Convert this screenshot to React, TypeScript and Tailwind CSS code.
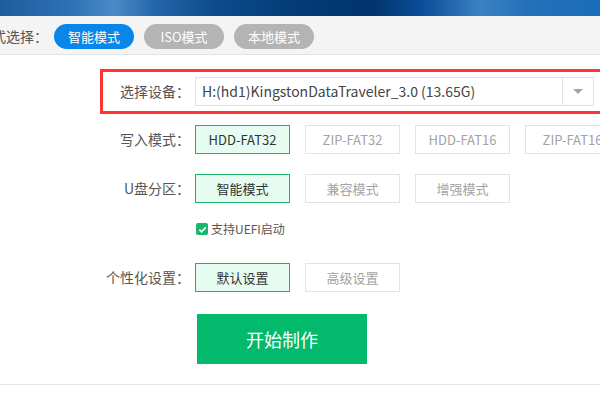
import React, { useState } from 'react';

const FONT = '"Noto Sans CJK SC", "Noto Sans", sans-serif';

const WRITE_MODES = ['HDD-FAT32', 'ZIP-FAT32', 'HDD-FAT16', 'ZIP-FAT16'];
const PARTITION_MODES = ['智能模式', '兼容模式', '增强模式'];
const CUSTOM_MODES = ['默认设置', '高级设置'];

function OptionButton({ label, active, onClick }: { label: string; active: boolean; onClick: () => void }) {
  return (
    <button
      onClick={onClick}
      className={
        active
          ? 'flex h-[29px] w-[95px] shrink-0 items-center justify-center border border-[#1cb36b] bg-[#e6fcf0] text-[13px] text-[#333]'
          : 'flex h-[29px] w-[95px] shrink-0 items-center justify-center border border-[#e3e3e3] bg-white text-[13px] text-[#a3a3a3]'
      }
    >
      {label}
    </button>
  );
}

function Row({ label, children, className = '' }: { label: string; children: React.ReactNode; className?: string }) {
  return (
    <div className={`flex items-center ${className}`}>
      <span className="w-[90px] shrink-0 text-right text-[14px] text-[#555]">{label}</span>
      <div className="ml-[5px] flex gap-[15px]">{children}</div>
    </div>
  );
}

export default function App() {
  const [mode, setMode] = useState('智能模式');
  const [writeMode, setWriteMode] = useState('HDD-FAT32');
  const [partition, setPartition] = useState('智能模式');
  const [custom, setCustom] = useState('默认设置');
  const [uefi, setUefi] = useState(true);

  return (
    <div className="relative h-[400px] w-[600px] overflow-hidden bg-white" style={{ fontFamily: FONT }}>
      <div className="h-[16px] bg-[linear-gradient(90deg,#1d5c9f_0%,#2e73b5_12%,#4a8bc8_19%,#2366a9_26%,#0d4a8c_36%,#043b77_50%,#01346c_62%,#0a4c96_70%,#3a81c3_80%,#2470b9_88%,#1b6cb8_100%)]" />

      <div className="flex h-[39px] items-start border-b border-[#e3e3e3] bg-[#f4f4f4] pt-[8px]">
        <span className="ml-[-22px] w-[70px] shrink-0 text-[14px] leading-[25px] text-[#555]">模式选择：</span>
        <div className="ml-[6px] flex gap-[10px]">
          {['智能模式', 'ISO模式', '本地模式'].map((m) => (
            <button
              key={m}
              onClick={() => setMode(m)}
              className={
                m === mode
                  ? 'h-[25px] w-[80px] rounded-full bg-[#0a86e9] text-[13px] text-white'
                  : 'h-[25px] w-[80px] rounded-full bg-[#b4b4b4] text-[13px] text-white'
              }
            >
              {m}
            </button>
          ))}
        </div>
      </div>

      <div className="flex flex-col pl-[100px]">
        <div className="mt-[14px] flex h-[45px] w-[520px] items-center border-[3px] border-[#ff3434]">
          <span className="w-[87px] shrink-0 text-right text-[14px] text-[#555]">选择设备：</span>
          <div className="ml-[5px] flex h-[29px] w-[399px] border border-[#e1e1e1]">
            <span className="flex-1 truncate pl-[6px] text-[14px] leading-[27px] text-[#444]">
              H:(hd1)KingstonDataTraveler_3.0 (13.65G)
            </span>
            <div className="flex w-[31px] items-center justify-center border-l border-[#e1e1e1]">
              <span className="h-0 w-0 border-x-[5px] border-t-[5px] border-x-transparent border-t-[#a6a6a6]" />
            </div>
          </div>
        </div>

        <Row label="写入模式：" className="mt-[11px]">
          {WRITE_MODES.map((m) => (
            <OptionButton key={m} label={m} active={m === writeMode} onClick={() => setWriteMode(m)} />
          ))}
        </Row>

        <Row label="U盘分区：" className="mt-[20px]">
          {PARTITION_MODES.map((m) => (
            <OptionButton key={m} label={m} active={m === partition} onClick={() => setPartition(m)} />
          ))}
        </Row>

        <label className="ml-[96px] mt-[18px] flex h-[16px] cursor-pointer items-center gap-[3px]" onClick={() => setUefi(!uefi)}>
          <span
            className={
              uefi
                ? 'flex h-[12px] w-[12px] items-center justify-center rounded-[2px] bg-[#18b86b]'
                : 'flex h-[12px] w-[12px] items-center justify-center rounded-[2px] border border-[#ccc] bg-white'
            }
          >
            {uefi ? (
              <svg width="9" height="9" viewBox="0 0 10 10">
                <path d="M1.5 5.2 L4 7.6 L8.6 2.6" fill="none" stroke="white" strokeWidth="1.8" />
              </svg>
            ) : null}
          </span>
          <span className="text-[12px] text-[#555]">支持UEFI启动</span>
        </label>

        <Row label="个性化设置：" className="mt-[26px]">
          {CUSTOM_MODES.map((m) => (
            <OptionButton key={m} label={m} active={m === custom} onClick={() => setCustom(m)} />
          ))}
        </Row>

        <button className="ml-[97px] mt-[22px] h-[50px] w-[170px] bg-[#03b96b] text-[18px] text-white">开始制作</button>
      </div>

      <div className="mt-[20px] border-t border-[#e5e5e5]" />
    </div>
  );
}
